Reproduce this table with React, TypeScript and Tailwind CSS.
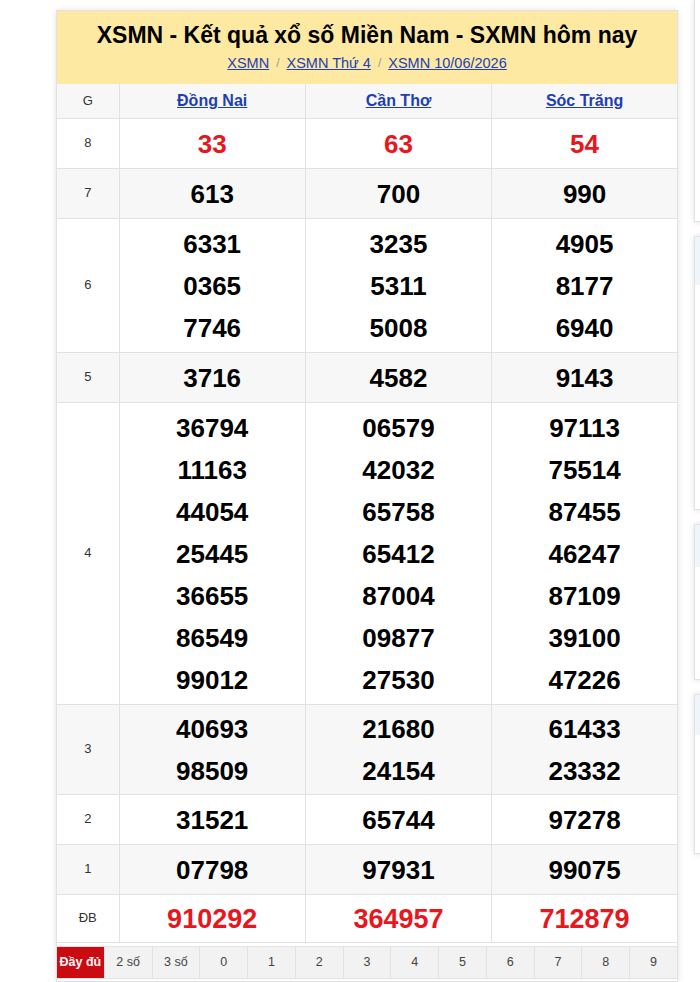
const provinces = ["Đồng Nai", "Cần Thơ", "Sóc Trăng"];

const rows: { g: string; red?: boolean; big?: boolean; tight?: boolean; vals: string[][] }[] = [
  { g: "8", red: true, vals: [["33"], ["63"], ["54"]] },
  { g: "7", vals: [["613"], ["700"], ["990"]] },
  {
    g: "6",
    vals: [
      ["6331", "0365", "7746"],
      ["3235", "5311", "5008"],
      ["4905", "8177", "6940"],
    ],
  },
  { g: "5", vals: [["3716"], ["4582"], ["9143"]] },
  {
    g: "4",
    vals: [
      ["36794", "11163", "44054", "25445", "36655", "86549", "99012"],
      ["06579", "42032", "65758", "65412", "87004", "09877", "27530"],
      ["97113", "75514", "87455", "46247", "87109", "39100", "47226"],
    ],
  },
  {
    g: "3",
    tight: true,
    vals: [
      ["40693", "98509"],
      ["21680", "24154"],
      ["61433", "23332"],
    ],
  },
  { g: "2", vals: [["31521"], ["65744"], ["97278"]] },
  { g: "1", vals: [["07798"], ["97931"], ["99075"]] },
  { g: "ĐB", red: true, big: true, tight: true, vals: [["910292"], ["364957"], ["712879"]] },
];

const tabs = ["Đầy đủ", "2 số", "3 số", "0", "1", "2", "3", "4", "5", "6", "7", "8", "9"];

function ResultCard() {
  return (
    <div className="mt-[10px] ml-[56px] w-[622px] shrink-0 border border-[#e2e2e2] bg-white shadow-[0_0_6px_rgba(0,0,0,0.12)]">
      {/* header */}
      <div className="flex h-[73px] flex-col items-center bg-[#fde9a2] pt-[10px]">
        <h1 className="text-[23px] font-bold leading-[28px] text-black">
          XSMN - Kết quả xổ số Miền Nam - SXMN hôm nay
        </h1>
        <div className="mt-[5px] flex items-center gap-[7px] text-[14.5px] leading-[18px] text-[#999]">
          <a className="text-[#2140b8] underline">XSMN</a>
          <span className="text-[12px]">/</span>
          <a className="text-[#2140b8] underline">XSMN Thứ 4</a>
          <span className="text-[12px]">/</span>
          <a className="text-[#2140b8] underline">XSMN 10/06/2026</a>
        </div>
      </div>

      <table className="w-full border-collapse text-center">
        <thead>
          <tr className="h-[34px] bg-[#f7f7f7]">
            <th className="w-[62px] border border-t-0 border-l-0 border-[#e2e2e2] text-[13px] font-normal text-[#333]">
              G
            </th>
            {provinces.map((p, i) => (
              <th
                key={p}
                className={
                  "border border-t-0 border-[#e2e2e2] text-[16px] font-bold " +
                  (i === 2 ? "border-r-0" : "")
                }
              >
                <a className="text-[#1d3fb5] underline">{p}</a>
              </th>
            ))}
          </tr>
        </thead>
        <tbody>
          {rows.map((r, ri) => (
            <tr key={r.g} className={ri % 2 === 1 ? "bg-[#f7f7f7]" : "bg-white"}>
              <td className="border border-l-0 border-[#e2e2e2] text-[13px] text-[#333]">{r.g}</td>
              {r.vals.map((col, ci) => (
                <td
                  key={ci}
                  className={
                    "border border-[#e2e2e2] " +
                    (r.tight ? "pt-[3px] pb-[2px] " : "pt-[4px] pb-[3px] ") +
                    (ci === 2 ? "border-r-0" : "")
                  }
                >
                  {col.map((v) => (
                    <div
                      key={v}
                      className={
                        "font-bold leading-[42px] " +
                        (r.big ? "text-[27px] " : "text-[26px] ") +
                        (r.red ? "text-[#e8161d]" : "text-black")
                      }
                    >
                      {v}
                    </div>
                  ))}
                </td>
              ))}
            </tr>
          ))}
        </tbody>
      </table>

      {/* digit filter */}
      <div className="mt-[3px] flex h-[33px] border-y border-[#e2e2e2] bg-[#f2f2f2]">
        {tabs.map((t, i) => (
          <div
            key={t}
            className={
              "flex flex-1 items-center justify-center border-r border-[#e2e2e2] text-[12.5px] " +
              (i === 0 ? "bg-[#cc0a12] font-bold text-white" : "text-[#444]") +
              (i === tabs.length - 1 ? " border-r-0" : "")
            }
          >
            {t}
          </div>
        ))}
      </div>
      <div className="h-[40px]" />
    </div>
  );
}

function SideCard({ h, header }: { h: number; header?: number }) {
  return (
    <div
      className="w-[300px] border border-[#e2e2e2] bg-white shadow-[0_0_6px_rgba(0,0,0,0.12)]"
      style={{ height: h }}
    >
      {header ? <div className="bg-[#eef5fd]" style={{ height: header }} /> : null}
    </div>
  );
}

export default function App() {
  return (
    <div className="flex h-[982px] gap-[16px] overflow-hidden bg-white font-['Liberation_Sans',Arial,sans-serif]">
      <ResultCard />
      <div className="flex shrink-0 flex-col gap-[14px]">
        <div className="h-[222px] w-[300px] border border-t-0 border-[#e2e2e2] bg-white shadow-[0_0_6px_rgba(0,0,0,0.12)]" />
        <SideCard h={274} header={48} />
        <SideCard h={156} header={42} />
        <SideCard h={160} header={40} />
      </div>
    </div>
  );
}
